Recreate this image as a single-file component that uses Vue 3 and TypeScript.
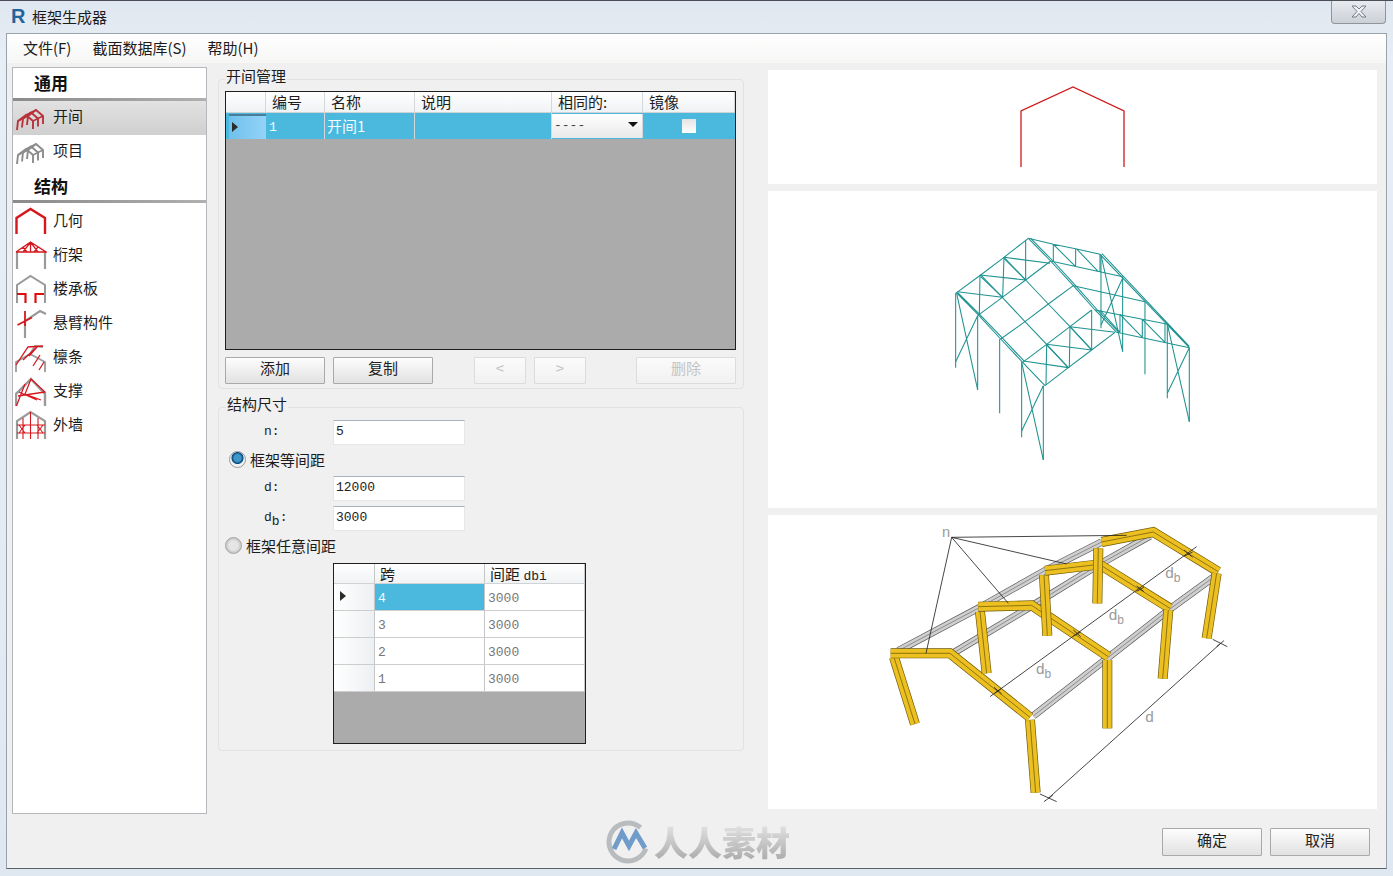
<template>
  <div class="window">
    <header class="titlebar">
      <span class="logo">R</span>
      <span class="title">框架生成器</span>
      <button class="close">
        <svg width="16" height="13" viewBox="0 0 16 13">
          <path d="M1 1h4l3 3 3-3h4l-5 5.500 5 5.500h-4l-3-3.500-3 3.500h-4l5-5.500z" fill="#eef1f4" stroke="#777c83" />
        </svg>
      </button>
    </header>

    <div class="client">
      <nav class="menubar">
        <span v-for="m in menus" :key="m">{{ m }}</span>
      </nav>

      <div class="body">
        <aside class="sidebar">
          <template v-for="section in sections" :key="section.name">
            <div class="section-head" :class="{ second: section.second }">{{ section.name }}</div>
            <div
              v-for="item in section.items"
              :key="item.name"
              class="nav-row"
              :class="{ active: item.active, up: !section.second }"
            >
              <svg class="nav-icon" width="32" height="32" viewBox="0 0 32 32" fill="none">
                <path v-for="(s, i) in item.strokes" :key="i" :d="s[0]" :stroke="s[1]" :stroke-width="s[2]" />
              </svg>
              <span>{{ item.name }}</span>
            </div>
          </template>
        </aside>

        <main class="middle">
          <fieldset class="group first">
            <legend>开间管理</legend>
            <div class="grid-box bays">
              <div class="bay-row head">
                <div class="cell"></div>
                <div v-for="h in bayHeads" :key="h" class="cell">{{ h }}</div>
              </div>
              <div class="bay-row selected">
                <div class="cell marker"><i class="arrow"></i></div>
                <div class="cell num">1</div>
                <div class="cell">开间1</div>
                <div class="cell"></div>
                <div class="cell combo"><span>----</span><i class="caret"></i></div>
                <div class="cell check"><i></i></div>
              </div>
            </div>
            <div class="actions">
              <button class="btn">添加</button>
              <button class="btn">复制</button>
              <button class="btn small off push-a">&lt;</button>
              <button class="btn small off">&gt;</button>
              <button class="btn off push-b">删除</button>
            </div>
          </fieldset>

          <fieldset class="group second">
            <legend>结构尺寸</legend>
            <div class="field">
              <label>n:</label>
              <input value="5" readonly />
            </div>
            <div class="radio-row on"><i class="radio checked"></i>框架等间距</div>
            <div class="field">
              <label>d:</label>
              <input value="12000" readonly />
            </div>
            <div class="field gap">
              <label>d<sub>b</sub>:</label>
              <input value="3000" readonly />
            </div>
            <div class="radio-row"><i class="radio"></i>框架任意间距</div>
            <div class="grid-box spans">
              <div class="span-row head">
                <div class="cell"></div>
                <div class="cell">跨</div>
                <div class="cell">间距 <span class="mono">dbi</span></div>
              </div>
              <div v-for="(r, i) in spans" :key="r" class="span-row">
                <div class="cell marker"><i v-if="i === 0" class="arrow"></i></div>
                <div class="cell mono" :class="{ picked: i === 0 }">{{ r }}</div>
                <div class="cell mono">3000</div>
              </div>
            </div>
          </fieldset>
        </main>

        <section class="previews">
          <div class="preview p1">
            <svg width="609" height="114" viewBox="768 70 609 114" fill="none">
              <path d="M1021 167V111L1073 87L1124 111V167" stroke="#d01a1a" stroke-width="1.300" />
            </svg>
          </div>
          <div class="preview p2">
            <svg width="609" height="317" viewBox="768 191 609 317" fill="none">
              <g transform="translate(930 225) scale(.3333)" stroke="#1f9391" stroke-width="3.200">
                <path v-for="(d, i) in wire" :key="i" :d="d" />
              </g>
            </svg>
          </div>
          <div class="preview p3">
            <svg width="609" height="294" viewBox="768 515 609 294" fill="none">
              <g transform="translate(870 520) scale(.3333)" stroke-linejoin="miter">
                <g v-for="(d, i) in purlins" :key="'p' + i">
                  <path :d="d" stroke="#5c5c5c" stroke-width="22" />
                  <path :d="d" stroke="#cfcfcf" stroke-width="18" />
                  <path :d="d" stroke="#8d8d8d" stroke-width="3" />
                </g>
                <g v-for="(d, i) in members" :key="'m' + i">
                  <path :d="d" stroke="#6f5a06" stroke-width="30" />
                  <path :d="d" stroke="#ecc021" stroke-width="26" />
                  <path :d="d" stroke="#8f7410" stroke-width="3" />
                </g>
                <path v-for="(d, i) in dims" :key="'d' + i" :d="d" stroke="#222" stroke-width="2.500" />
                <g class="dim-text" fill="#9a9a9a">
                  <text x="216" y="50" font-size="44">n</text>
                  <text x="498" y="462" font-size="46">d<tspan font-size="36" dy="12">b</tspan></text>
                  <text x="716" y="300" font-size="46">d<tspan font-size="36" dy="12">b</tspan></text>
                  <text x="886" y="175" font-size="46">d<tspan font-size="36" dy="12">b</tspan></text>
                  <text x="826" y="606" font-size="46">d</text>
                </g>
              </g>
            </svg>
          </div>
        </section>
      </div>

      <footer class="footer">
        <button class="btn">确定</button>
        <button class="btn">取消</button>
      </footer>

      <div class="watermark">
        <svg width="46" height="46" viewBox="0 0 46 46" fill="none">
          <circle cx="23" cy="23" r="19" stroke="#b9bcbf" stroke-width="5" stroke-dasharray="96 24" transform="rotate(20 23 23)" />
          <path d="M9 30L17 14L24 27L31 14L40 29" stroke="#6f9cc9" stroke-width="5" />
        </svg>
        <span>人人素材</span>
      </div>
    </div>
  </div>
</template>

<script setup lang="ts">
type Stroke = [string, string, number];

interface NavItem {
  name: string;
  active?: boolean;
  strokes: Stroke[];
}

const RED = '#d6181e';
const GREY = '#9a9a9a';

// three gable frames standing behind each other
const frames = (color: string): Stroke[] => {
  const out: Stroke[] = [];
  [10, 5, 0].forEach((dx) => {
    const dy = -dx * 0.5;
    out.push([
      `M${2 + dx} ${28 + dy}L${3 + dx} ${19 + dy}L${11 + dx} ${13 + dy}L${18 + dx} ${19 + dy}V${27 + dy}`,
      color,
      1.9,
    ]);
  });
  out.push(['M11 13L21 8M3 19L13 14M18 19L28 14', color, 1.4]);
  return out;
};

const gable = 'M2 31V13L15.500 4L30 13V31';

const menus = ['文件(F)', '截面数据库(S)', '帮助(H)'];

const sections: { name: string; second?: boolean; items: NavItem[] }[] = [
  {
    name: '通用',
    items: [
      { name: '开间', active: true, strokes: frames('#b8343c') },
      { name: '项目', strokes: frames('#8c8c8c') },
    ],
  },
  {
    name: '结构',
    second: true,
    items: [
      { name: '几何', strokes: [['M1.500 30V14L15.500 5L30 14V30', RED, 2.4]] },
      {
        name: '桁架',
        strokes: [
          ['M2 31V14M30 31V14', GREY, 2.2],
          ['M1 14L15.500 4L31 14H1M8 14L15.500 4L23 14M15.500 4V14M8 9L12 14M23 9L19 14', RED, 1.3],
        ],
      },
      {
        name: '楼承板',
        strokes: [
          [gable, GREY, 2],
          ['M2 22H10.500V31M29 22H20.500V31', '#dd1010', 2.2],
        ],
      },
      {
        name: '悬臂构件',
        strokes: [
          ['M10 32V15L25 5L31 8', GREY, 2.2],
          ['M2.500 19L17 11.500M10 5V20', RED, 1.8],
        ],
      },
      {
        name: '檩条',
        strokes: [
          ['M1 33V22L15 14L30 22V33M15 14L20 6L28 7', GREY, 1.800],
          ['M1 25L13 7L28 6M8 20L22 7M14 16L23 6M18 26L25 15M24 30L29 22', RED, 1.300],
        ],
      },
      {
        name: '支撑',
        strokes: [
          ['M1 33V20L16 5L30 20V33', GREY, 2.400],
          ['M1 33L10 10M3 22L30 18L16 5L10 20L26 26M4 18L22 26', RED, 1.300],
        ],
      },
      {
        name: '外墙',
        strokes: [
          [gable, GREY, 2.2],
          [
            'M2 17H30M2 25H30M8 10V31M15.500 4V31M23 10V31M4 17L10 25M10 17L4 25M22 17L28 25M28 17L22 25',
            RED,
            1.100,
          ],
        ],
      },
    ],
  },
];

const bayHeads = ['编号', '名称', '说明', '相同的:', '镜像'];
const spans = [4, 3, 2, 1];

// traced in 3x coordinates of the wireframe area
const wire = [
  'M77 205V428M143 272V495M209 342V565M275 412V637M340 482V705',
  'M80 205L143 495M143 272L77 410M275 412L340 705M340 482L275 618',
  'M77 205L152 150L222 97L295 40M143 272L217 217L287 165L362 108M212 342L285 290L355 237L430 182',
  'M278 412L350 358L420 305L485 255M345 482L415 428L485 375L555 322',
  'M80 204L145 270L212 342L278 412L345 482M84 204L149 268L216 338L282 408',
  'M152 150L217 217L285 290L350 358L415 428M222 97L287 165L355 237L420 305L485 375',
  'M295 40L362 108L430 182L495 255L560 322M302 40L369 108L437 182L502 255L567 322',
  'M150 150L148 270M222 97L218 217M287 45V165M350 358L348 480M420 305L418 428M485 255V375',
  'M82 200L217 217M150 150L287 165M222 97L360 115M152 155L218 217M222 100L287 165',
  'M280 408L415 428M350 358L485 375M420 305L555 322M350 360L415 428M420 305L485 375',
  'M295 40L370 58L440 72L510 88M370 58V110M437 72V125M510 88V140M362 108L578 155M370 58L437 125M440 72L505 140',
  'M430 182L645 230M495 255L710 297M560 322L778 368',
  'M510 88L778 368M516 86L778 364',
  'M513 88V310M578 155V380M645 230V448M712 297V520M778 368V590',
  'M513 90L578 380M578 160L513 300M712 297L778 590M778 368L712 505',
  'M570 268V322M637 283V337M705 297V352M510 255L570 322M570 268L637 337M637 283L705 352',
];

const purlins = [
  'M85 392L330 262L525 152L695 66',
  'M245 402L485 258L688 133L840 48',
  'M490 588L715 412L900 267L1040 165',
];

const members = [
  'M72 412L135 612',
  'M62 400H240L480 592',
  'M480 600L497 818',
  'M330 275L350 460',
  'M325 260L485 256L715 410',
  'M712 420V625',
  'M522 165L532 347',
  'M525 152L688 133L900 265',
  'M895 270L878 476',
  'M685 85L682 250',
  'M695 66L850 36L1045 155',
  'M1040 160L1010 355',
];

const dims = [
  'M245 52L168 400M245 52L415 250M245 52L590 132M245 52L770 46',
  'M360 530L980 80',
  'M535 835L1050 372M510 822L560 845M522 845L548 826M1028 358L1072 380M1040 380L1062 362',
  'M372 502L395 522M374 520L394 506M610 330L632 350M610 348L632 336M800 198L822 215M800 214L822 202M942 90L968 112M944 108L968 96',
];
</script>

<style>
html,
body {
  margin: 0;
  background: #e6ecf3;
}
</style>

<style scoped>
.window {
  width: 1393px;
  height: 876px;
  box-sizing: border-box;
  padding: 0 6px 7px;
  display: flex;
  flex-direction: column;
  background: linear-gradient(180deg, #dfe7f0, #e8eef5 60px, #dfe8f1);
  border-top: 1px solid #4b4f55;
  font-family: "Noto Sans CJK SC", "Liberation Sans", sans-serif;
  font-size: 15px;
  color: #1c1c1c;
  overflow: hidden;
}

.titlebar {
  height: 32px;
  flex: none;
  display: flex;
  align-items: center;
  position: relative;
}

.logo {
  width: 15px;
  margin: 0 6px 2px 5px;
  font-family: "Liberation Sans", sans-serif;
  font-weight: 700;
  font-size: 20px;
  color: #1f659c;
}

.title {
  font-size: 15px;
  margin-bottom: 2px;
}

.close {
  position: absolute;
  right: 1px;
  top: -1px;
  width: 55px;
  height: 24px;
  padding: 0;
  display: flex;
  align-items: center;
  justify-content: center;
  border: 1px solid #8f959c;
  border-top: 0;
  border-radius: 0 0 4px 4px;
  background: linear-gradient(180deg, #e9ecf0, #cbd0d7);
}

.client {
  flex: 1;
  position: relative;
  display: flex;
  flex-direction: column;
  background: #f0f0f0;
  border: 1px solid #98a2ac;
  border-bottom-color: #5c6268;
}

.menubar {
  height: 29px;
  flex: none;
  box-sizing: border-box;
  padding: 0 0 3px 16px;
  display: flex;
  align-items: center;
  gap: 21px;
  font-size: 15px;
  background: linear-gradient(180deg, #fff, #f6f6f5);
}

.body {
  flex: 1;
  display: flex;
  padding: 4px 9px 0 5px;
}

.sidebar {
  width: 195px;
  height: 747px;
  box-sizing: border-box;
  background: #fff;
  border: 1px solid #b4b8bc;
}

.section-head {
  height: 33px;
  box-sizing: border-box;
  padding: 3px 0 0 21px;
  font-size: 17px;
  line-height: 24px;
  font-weight: 700;
  color: #111;
  border-bottom: 3px solid;
  border-image: linear-gradient(90deg, #8a8a8a, #b0b0b0) 1;
}

.section-head.second {
  height: 34px;
  padding-top: 5px;
}

.nav-row {
  height: 34px;
  display: flex;
  align-items: center;
  gap: 6px;
  padding-left: 2px;
  font-size: 15px;
}

.nav-row.active {
  background: linear-gradient(180deg, #e2e2e2, #cfcfcf);
}

.nav-row span {
  margin-bottom: 1px;
}

.nav-row.up span {
  margin-bottom: 5px;
}

.nav-icon {
  flex: none;
}

.middle {
  width: 526px;
  margin-left: 11px;
  display: flex;
  flex-direction: column;
}

.group {
  margin: 0;
  box-sizing: border-box;
  border: 1px solid #e2e2e2;
  border-radius: 4px;
  padding: 0 7px 0 6px;
  min-width: 0;
}

.group legend {
  padding: 0 1px;
  margin-left: 0;
  font-size: 15px;
  line-height: 20px;
  transform: translateY(-3px);
}

.group.first {
  height: 320px;
  margin-top: 2px;
}

.group.second {
  height: 354px;
  margin-top: 8px;
  padding: 3px 7px 0;
}

.grid-box {
  box-sizing: border-box;
  border: 1px solid #1f1f1f;
  background: #ababab;
}

.bays {
  height: 259px;
  margin-top: 2px;
}

.cell {
  box-sizing: border-box;
  border-right: 1px solid #d5d8da;
  padding-left: 6px;
  white-space: nowrap;
  overflow: hidden;
}

.bay-row {
  display: grid;
  grid-template-columns: 40px 59px 90px 137px 91px 92px;
}

.bay-row.head,
.span-row.head {
  height: 20px;
  line-height: 20px;
  background: linear-gradient(180deg, #fff, #f0f2f4);
  border-bottom: 1px solid #cfd3d6;
}

.bay-row.selected {
  height: 26px;
  line-height: 26px;
  margin-top: 0;
  color: #f4fbff;
  background: #4bb8de;
}

.bay-row.selected .marker {
  margin: 1px 0 0 3px;
  background: linear-gradient(90deg, #6fc0ec, #94d3f8);
  border: 0;
  border-top: 2px solid #4b7d98;
  padding-left: 3px;
  position: relative;
}

.bay-row.selected .num {
  font-family: "Liberation Mono", monospace;
  font-size: 13px;
  line-height: 29px;
  padding-left: 3px;
}

.bay-row.selected .cell:nth-child(3) {
  padding-left: 2px;
}

.arrow {
  display: block;
  position: absolute;
  top: 6px;
  left: 3px;
  width: 0;
  height: 0;
  border-left: 6px solid #2b2b2b;
  border-top: 5px solid transparent;
  border-bottom: 5px solid transparent;
}

.combo {
  margin: 1px 0;
  height: 24px;
  line-height: 24px;
  padding-left: 2px;
  color: #444;
  font-family: "Liberation Mono", monospace;
  font-size: 13px;
  background: linear-gradient(180deg, #fff, #e9e9e9);
  position: relative;
}

.caret {
  position: absolute;
  right: 4px;
  top: 8px;
  width: 0;
  height: 0;
  border-top: 5px solid #111;
  border-left: 5px solid transparent;
  border-right: 5px solid transparent;
}

.check {
  display: flex;
  align-items: center;
  justify-content: center;
  border: 0;
  padding: 0;
}

.check i {
  display: block;
  width: 14px;
  height: 14px;
  background: linear-gradient(180deg, #e4e4e4, #fff);
}

.actions {
  display: flex;
  gap: 8px;
  margin-top: 7px;
}

.btn {
  width: 100px;
  height: 27px;
  padding: 0 0 5px;
  box-sizing: border-box;
  font-family: inherit;
  font-size: 15px;
  line-height: 20px;
  color: #222;
  border: 1px solid #a9a9a9;
  border-radius: 1px;
  background: linear-gradient(180deg, #fdfdfd, #ececec 60%, #e2e2e2);
}

.btn.small {
  width: 52px;
}

.btn.off {
  color: #c4c4c4;
  border-color: #dcdcdc;
  background: linear-gradient(180deg, #fbfbfb, #f1f1f1);
}

.push-a {
  margin-left: 33px;
}

.push-b {
  margin-left: 42px;
}

.field {
  display: flex;
  align-items: center;
  height: 25px;
  padding-left: 38px;
  font-family: "Liberation Mono", monospace;
  font-size: 13px;
}

.field.gap {
  margin-top: 5px;
}

.field label {
  width: 69px;
  margin-bottom: 3px;
  font-weight: 400;
}

.field sub {
  font-size: 13px;
  line-height: 0;
}

.field input {
  width: 132px;
  height: 25px;
  box-sizing: border-box;
  padding: 0 2px 2px;
  font-family: inherit;
  font-size: 13px;
  color: #222;
  background: #fff;
  border: 1px solid #e4e6e8;
  border-top-color: #aab2b9;
  outline: none;
}

.radio-row {
  height: 32px;
  box-sizing: border-box;
  display: flex;
  align-items: center;
  gap: 4px;
  padding: 0 0 4px 0;
}

.radio-row.on {
  height: 31px;
  gap: 4px;
  padding: 0 0 2px 3px;
}

.radio {
  display: block;
  width: 15px;
  height: 15px;
  margin-left: -1px;
  border-radius: 50%;
  background: radial-gradient(circle, #e6e6e6 0 40%, #c6c6c6 70%);
  border: 1px solid #a6a6a6;
}

.radio-row.on .radio {
  margin-left: 0;
}

.radio.checked {
  background: radial-gradient(circle at 50% 40%, #3d95c8 0 30%, #0d4e80 45%, #0d4e80 48%, #eef2f5 55%);
  border-color: #9a9a9a;
}

.spans {
  width: 253px;
  height: 181px;
  margin-left: 107px;
}

.span-row {
  display: grid;
  grid-template-columns: 41px 110px 100px;
  height: 27px;
  line-height: 29px;
  box-sizing: border-box;
  background: #fff;
  color: #777;
  border-bottom: 1px solid #cdcdcd;
}

.span-row .cell {
  border-right-color: #c6c6c6;
  padding-left: 3px;
}

.span-row.head {
  height: 20px;
  color: #1c1c1c;
}

.span-row.head .cell {
  padding-left: 5px;
}

.span-row .marker {
  position: relative;
  background: linear-gradient(90deg, #fff, #edf0f3);
}

.span-row .arrow {
  top: 7px;
  left: 6px;
}

.mono {
  font-family: "Liberation Mono", monospace;
  font-size: 13px;
}

.span-row .picked {
  background: #4bb8de;
  color: #f4fbff;
}

.previews {
  width: 609px;
  margin-left: 24px;
  margin-top: 3px;
  display: flex;
  flex-direction: column;
  gap: 7px;
}

.preview {
  background: #fff;
}

.preview svg {
  display: block;
}

.p1 {
  height: 114px;
}

.p2 {
  height: 317px;
}

.p3 {
  height: 294px;
}

.dim-text {
  font-family: "Liberation Sans", sans-serif;
}

.footer {
  height: 47px;
  flex: none;
  display: flex;
  justify-content: flex-end;
  gap: 8px;
  padding: 7px 16px 0 0;
  box-sizing: border-box;
}

.footer .btn {
  height: 28px;
}

.watermark {
  position: absolute;
  left: 598px;
  top: 785px;
  display: flex;
  align-items: center;
  gap: 3px;
}

.watermark span {
  font-size: 34px;
  font-weight: 900;
  line-height: 40px;
  color: transparent;
  background: linear-gradient(180deg, #e6e6e6, #a9a9a9);
  -webkit-background-clip: text;
  background-clip: text;
}
</style>
